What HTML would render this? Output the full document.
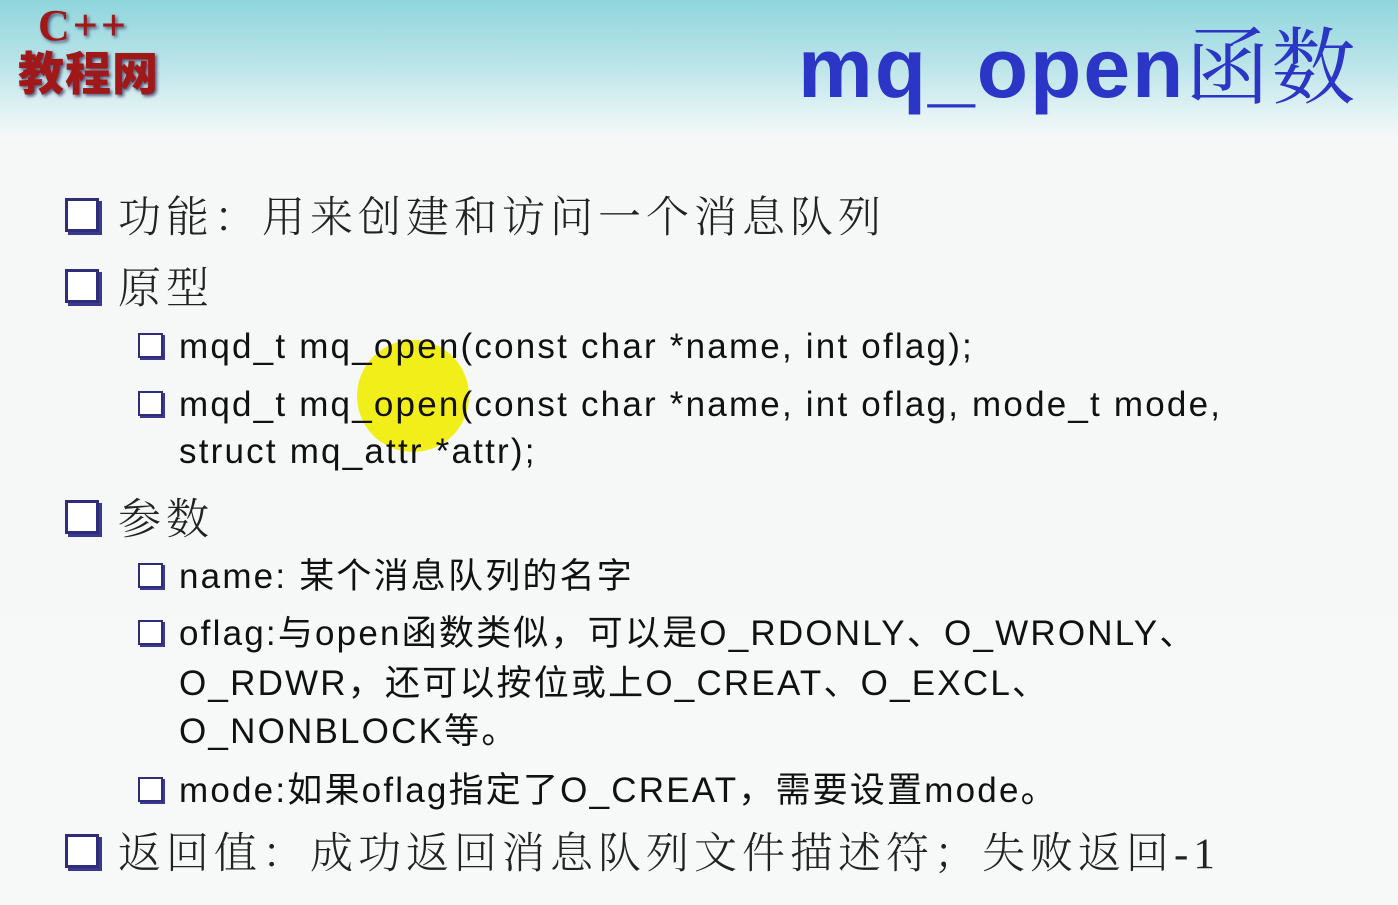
<!DOCTYPE html>
<html><head><meta charset="utf-8"><style>
body{margin:0;width:1398px;height:905px;overflow:hidden;position:relative;font-family:"Liberation Sans","Noto Sans CJK SC",sans-serif;
background:linear-gradient(to bottom,#8fd6dc 0px,#b7e3e8 60px,#e4f3f5 115px,#f6f8f8 140px,#f7f8f8 905px);}
.a{position:absolute;white-space:nowrap;}
.big{font-family:"Liberation Serif","Noto Serif CJK SC",serif;font-size:43px;letter-spacing:5px;color:#222;font-weight:300;line-height:1}
.sub{font-size:35px;color:#111;line-height:1;letter-spacing:2.2px}
.bb{position:absolute;width:28px;height:28px;border:3px solid #2f2d7a;box-shadow:3px 3px 0 #3a3890;background:#fff}
.sb{position:absolute;width:21px;height:21px;border:2.5px solid #2f2d7a;box-shadow:2px 2px 0 #3a3890;background:#fff}
</style></head><body>
<div class="a" style="left:38px;top:0px;font-family:'Liberation Serif',serif;font-weight:bold;font-size:44px;color:#a01818;text-shadow:2px 2px 3px #557;letter-spacing:3px">C++</div>
<div class="a" style="left:18px;top:48px;font-family:'Noto Sans CJK SC',sans-serif;font-weight:900;font-size:46px;color:#a01818;text-shadow:2px 2px 3px #557;line-height:1;letter-spacing:1px">教程网</div>
<div class="a" style="left:798px;top:20px;font-size:84px;font-weight:bold;color:#2b35c6;line-height:1;letter-spacing:2px">mq_open<span style="font-family:'Noto Serif CJK SC',serif;font-weight:400;font-size:84px">函数</span></div>

<div style="position:absolute;left:357px;top:340px;width:112px;height:112px;border-radius:50%;background:#f2ee1a"></div>

<div class="bb" style="left:65px;top:198px"></div>
<div class="a big" style="left:118px;top:197px">功能：用来创建和访问一个消息队列</div>
<div class="bb" style="left:65px;top:269px"></div>
<div class="a big" style="left:118px;top:268px">原型</div>

<div class="sb" style="left:138px;top:333px"></div>
<div class="a sub" style="left:179px;top:329px">mqd_t mq_open(const char *name, int oflag);</div>
<div class="sb" style="left:138px;top:391px"></div>
<div class="a sub" style="left:179px;top:387px">mqd_t mq_open(const char *name, int oflag, mode_t mode,</div>
<div class="a sub" style="left:179px;top:434px">struct mq_attr *attr);</div>

<div class="bb" style="left:65px;top:500px"></div>
<div class="a big" style="left:118px;top:499px">参数</div>

<div class="sb" style="left:138px;top:563px"></div>
<div class="a sub" style="left:179px;top:559px">name: 某个消息队列的名字</div>
<div class="sb" style="left:138px;top:620px"></div>
<div class="a sub" style="left:179px;top:616px">oflag:与open函数类似，可以是O_RDONLY、O_WRONLY、</div>
<div class="a sub" style="left:179px;top:666px">O_RDWR，还可以按位或上O_CREAT、O_EXCL、</div>
<div class="a sub" style="left:179px;top:714px">O_NONBLOCK等。</div>
<div class="sb" style="left:138px;top:777px"></div>
<div class="a sub" style="left:179px;top:773px">mode:如果oflag指定了O_CREAT，需要设置mode。</div>

<div class="bb" style="left:65px;top:834px"></div>
<div class="a big" style="left:118px;top:833px">返回值：成功返回消息队列文件描述符；失败返回-1</div>
</body></html>
